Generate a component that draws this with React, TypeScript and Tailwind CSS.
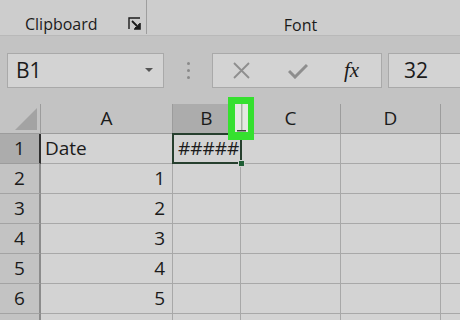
import React from "react";

const cols = [
  { key: "A", w: "w-[132px]" },
  { key: "B", w: "w-[68px]" },
  { key: "C", w: "w-[100px]" },
  { key: "D", w: "w-[100px]" },
];

const rows: { n: number; a: string; b: string }[] = [
  { n: 1, a: "Date", b: "#####" },
  { n: 2, a: "1", b: "" },
  { n: 3, a: "2", b: "" },
  { n: 4, a: "3", b: "" },
  { n: 5, a: "4", b: "" },
  { n: 6, a: "5", b: "" },
  { n: 7, a: "", b: "" },
];

export default function App() {
  return (
    <div
      className="relative w-[460px] h-[320px] overflow-hidden bg-[#d3d3d3] text-[#1b1b1b]"
      style={{ fontFamily: '"Open Sans", "Noto Sans", sans-serif' }}
    >
      {/* ribbon group labels */}
      <div className="flex h-[36px] bg-[#cdcdcd] border-b border-[#b9b9b9]">
        <div className="relative w-[147px] h-[34px] border-r border-[#9e9e9e] flex items-end">
          <span className="ml-[25px] text-[16px] leading-[20px]">Clipboard</span>
          <svg
            className="absolute left-[128px] top-[17px]"
            width="13"
            height="13"
            viewBox="0 0 13 13"
            fill="none"
            stroke="#1c1c1c"
          >
            <path d="M1 12V1h11" strokeWidth="1.4" />
            <path d="M12 6v6H6" strokeWidth="1.6" />
            <path d="M4 4l7 7M7 11h4V7" strokeWidth="1.8" />
          </svg>
        </div>
        <div className="flex-1 flex items-end justify-center pr-[6px]">
          <span className="text-[16px] leading-[20px]">Font</span>
        </div>
      </div>

      {/* formula bar */}
      <div className="flex items-start h-[68px] bg-[#c3c3c3] pt-[17px]">
        <div className="ml-[7px] w-[157px] h-[35px] bg-[#d3d3d3] border border-[#a9a9a9] flex items-center justify-between pl-[8px] pr-[10px]">
          <span className="text-[21px] leading-none">B1</span>
          <svg width="8" height="5" viewBox="0 0 8 5">
            <path d="M0 0h8L4 4z" fill="#555" />
          </svg>
        </div>
        <div className="w-[48px] h-[35px] flex flex-col items-center justify-center gap-[4px]">
          <div className="w-[3px] h-[3px] rounded-full bg-[#8a8a8a]" />
          <div className="w-[3px] h-[3px] rounded-full bg-[#8a8a8a]" />
          <div className="w-[3px] h-[3px] rounded-full bg-[#8a8a8a]" />
        </div>
        <div className="w-[170px] h-[35px] bg-[#d3d3d3] border border-[#a9a9a9] flex items-center">
          <svg className="ml-[20px]" width="17" height="17" viewBox="0 0 17 17">
            <path d="M1 1l15 15M16 1L1 16" stroke="#8e8e8e" strokeWidth="1.8" />
          </svg>
          <svg className="ml-[38px]" width="20" height="16" viewBox="0 0 20 16">
            <path d="M1 8l6 6L19 2" stroke="#8e8e8e" strokeWidth="3" fill="none" />
          </svg>
          <span
            className="ml-[36px] text-[21px] leading-none italic"
            style={{ fontFamily: '"Liberation Serif", "DejaVu Serif", serif' }}
          >
            fx
          </span>
        </div>
        <div className="ml-[6px] flex-1 h-[35px] bg-[#d3d3d3] border border-[#a9a9a9] border-r-0 flex items-center pl-[15px]">
          <span className="text-[21px] leading-none">32</span>
        </div>
      </div>

      {/* grid */}
      <div className="flex flex-col">
        {/* header row */}
        <div className="flex h-[30px]">
          <div className="relative w-[41px] h-full bg-[#c3c3c3] border-r border-b border-[#9c9c9c]">
            <svg className="absolute left-[15px] top-[4px]" width="23" height="23" viewBox="0 0 23 23">
              <path d="M0 22h22V0z" fill="#a3a3a3" />
            </svg>
          </div>
          {cols.map((c) => (
            <div
              key={c.key}
              className={`${c.w} h-full flex items-center justify-center text-[19px] border-r border-b ${
                c.key === "B"
                  ? "bg-[#acacac] border-b-[#3a3a3a] border-r-[#9c9c9c]"
                  : "bg-[#c3c3c3] border-[#9c9c9c]"
              }`}
            >
              {c.key}
            </div>
          ))}
          <div className="flex-1 h-full bg-[#c3c3c3] border-b border-[#9c9c9c]" />
        </div>

        {rows.map((r) => (
          <div key={r.n} className="flex h-[30px]">
            <div
              className={`w-[41px] h-full flex items-center justify-center text-[19px] border-b ${
                r.n === 1
                  ? "bg-[#acacac] border-r-2 border-r-[#2e2e2e] border-b-[#9c9c9c]"
                  : "bg-[#c3c3c3] border-r-2 border-r-[#8c8c8c] border-b-[#a3a3a3]"
              }`}
            >
              {r.n < 7 ? r.n : ""}
            </div>
            <div
              className={`w-[132px] h-full border-r border-b border-[#a8a8a8] flex items-center text-[19px] ${
                r.n === 1 ? "justify-start pl-[4px]" : "justify-end pr-[7px]"
              }`}
            >
              {r.a}
            </div>
            <div className="w-[68px] h-full border-r border-b border-[#a8a8a8] flex items-center pl-[5px] text-[19px]">
              {r.b}
            </div>
            <div className="w-[100px] h-full border-r border-b border-[#a8a8a8]" />
            <div className="w-[100px] h-full border-r border-b border-[#a8a8a8]" />
            <div className="flex-1 h-full border-b border-[#a8a8a8]" />
          </div>
        ))}
      </div>

      {/* active cell B1 */}
      <div className="absolute left-[172px] top-[133px] w-[70px] h-[31px] border-2 border-[#263f2e]" />
      <div className="absolute left-[238px] top-[160px] w-[7px] h-[7px] bg-[#1f5e35] border border-[#d2d2d2]" />

      {/* highlighted column divider */}
      <div className="absolute left-[228px] top-[97px] w-[26px] h-[43px] bg-[#35e02f] flex items-center justify-center">
        <svg width="13" height="29" viewBox="0 0 13 29">
          <rect x="0" y="0" width="13" height="28" fill="#e4e8e2" />
          <rect x="6" y="0" width="1.5" height="26" fill="#a7b0a4" />
          <rect x="2" y="26" width="9" height="1.5" fill="#404040" />
        </svg>
      </div>
    </div>
  );
}
